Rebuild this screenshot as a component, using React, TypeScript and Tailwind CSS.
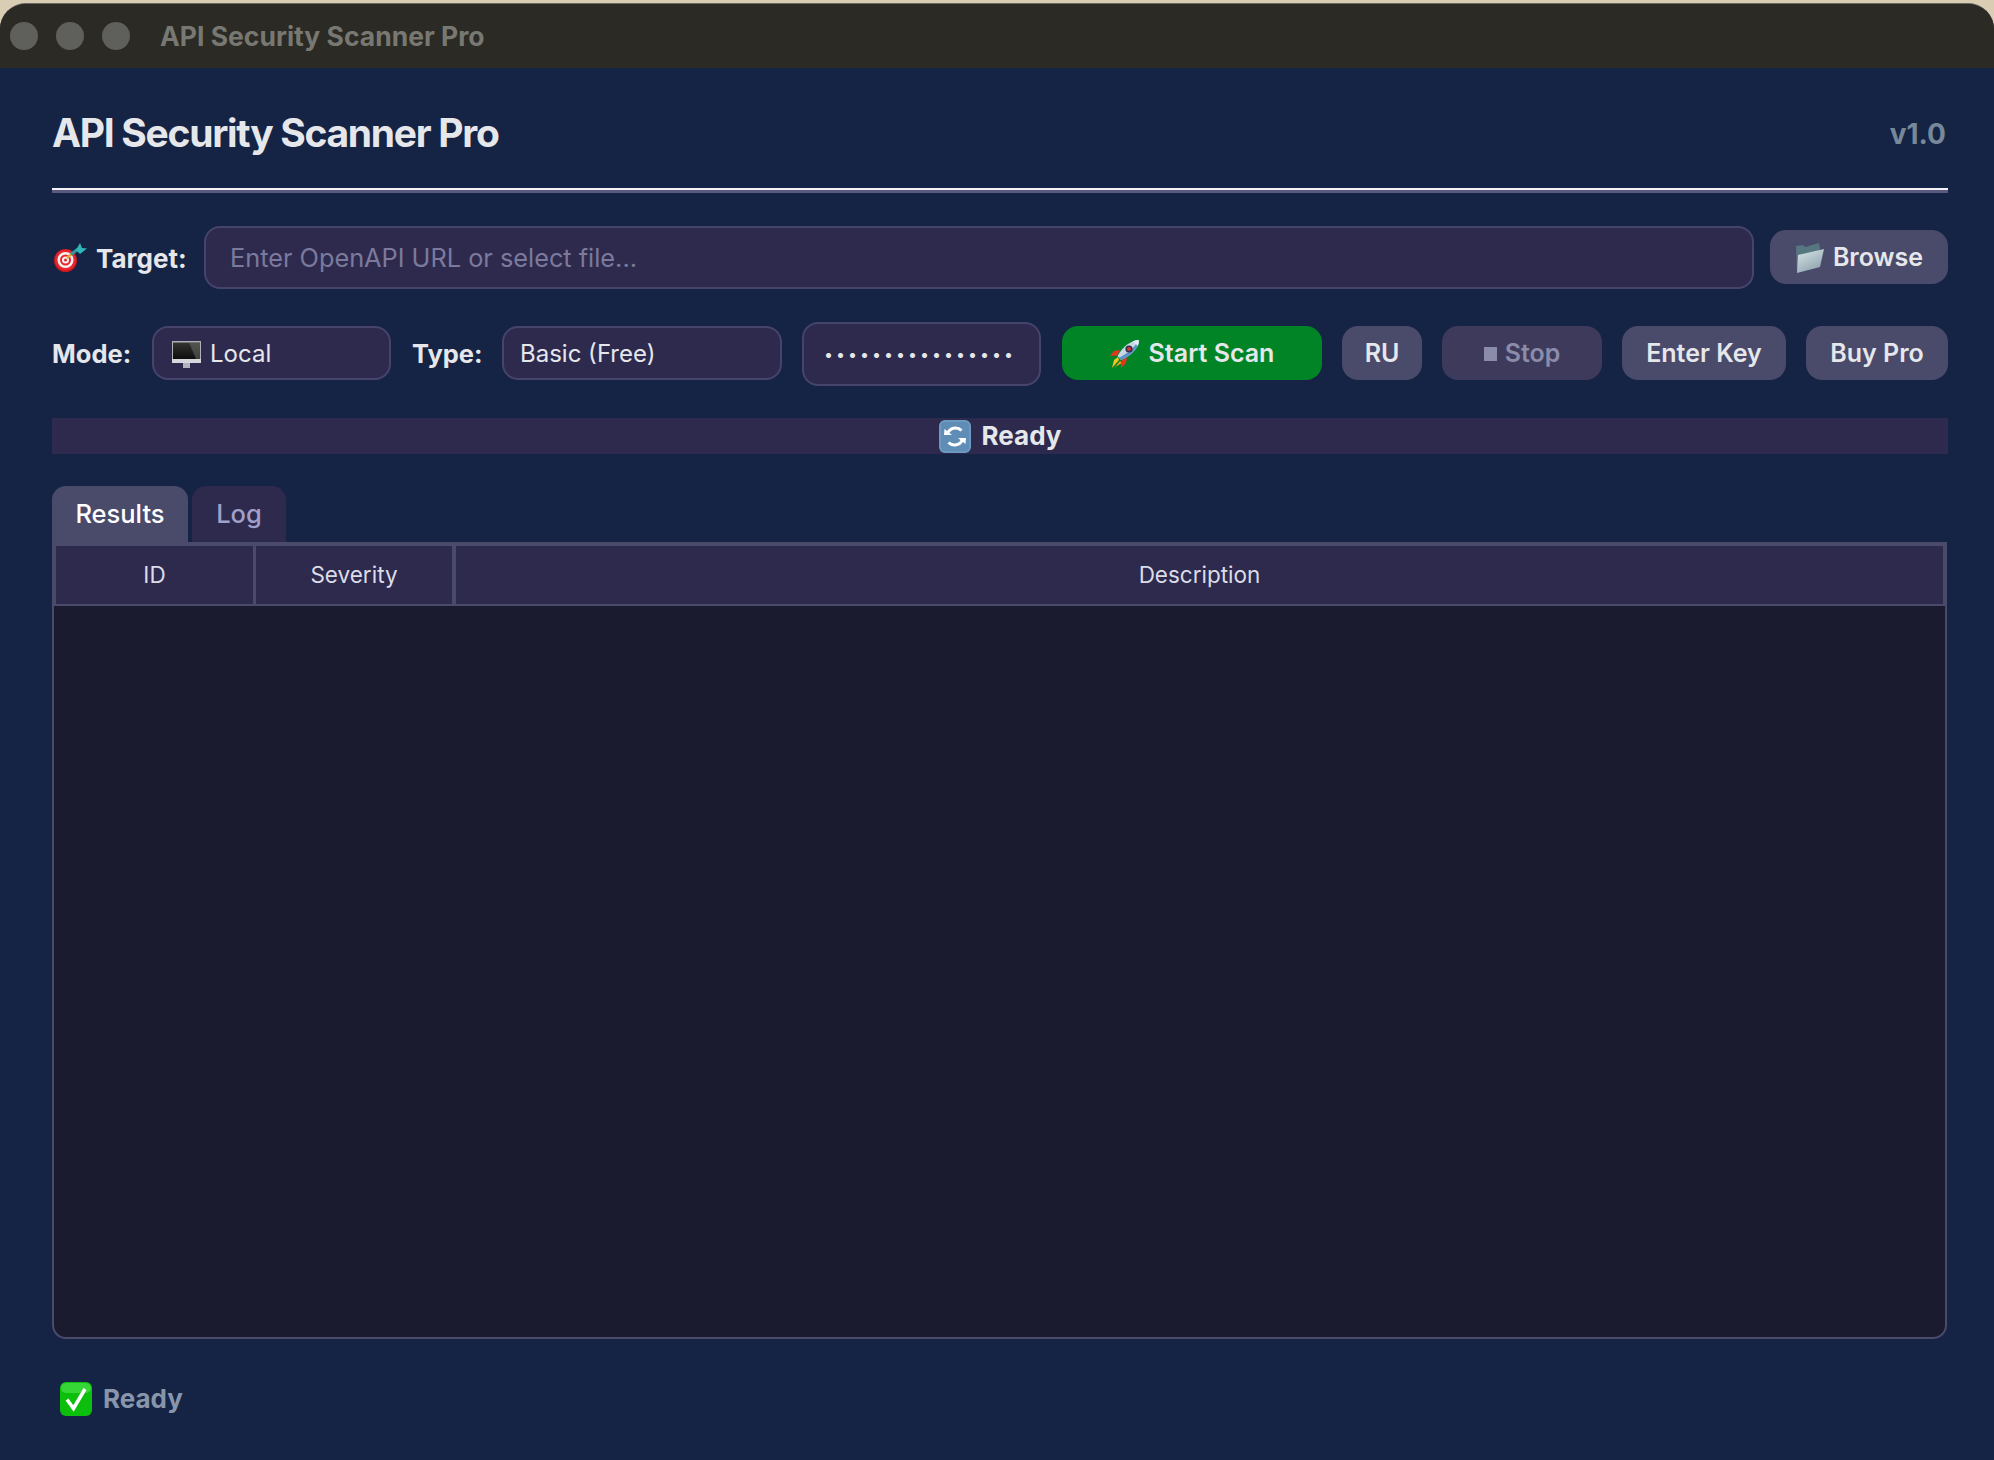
import React from 'react'

const font = "font-['Inter','Liberation_Sans',sans-serif]"

const TargetIcon = () => (
  <svg viewBox="0 0 33 29" className="w-[33px] h-[29px] shrink-0">
    <circle cx="11.500" cy="17.500" r="11.500" fill="#c8161f" />
    <circle cx="11.500" cy="17" r="10.500" fill="#e8262c" />
    <circle cx="11.500" cy="17" r="8" fill="#f6f2f2" />
    <circle cx="11.500" cy="17" r="5.500" fill="#e8262c" />
    <circle cx="11.500" cy="17" r="3.500" fill="#f6f2f2" />
    <circle cx="11.500" cy="17" r="1.500" fill="#e8262c" />
    <path d="M13 15 L18 10.500" stroke="#e6a93a" strokeWidth="2.500" />
    <path d="M17 11.500 L24 6" stroke="#2e97a3" strokeWidth="3" />
    <path d="M22 7 L26 0 L28 5 L33 5.500 L26 11 Z" fill="#2fb6ba" />
  </svg>
)

const MonitorIcon = () => (
  <svg viewBox="0 0 29 27" className="w-[29px] h-[27px] shrink-0">
    <defs>
      <linearGradient id="screen" x1="0" y1="1" x2="0" y2="0">
        <stop offset="0" stopColor="#0d0d0f" />
        <stop offset="1" stopColor="#34352f" />
      </linearGradient>
    </defs>
    <rect x="0" y="0" width="29" height="20" fill="#aeb0b6" />
    <rect x="1" y="1.500" width="27" height="16.500" fill="url(#screen)" />
    <path d="M17 1.500 H28 V18 H24 Z" fill="#6b6c68" opacity="0.55" />
    <rect x="0" y="18" width="29" height="4" fill="#d6d6dc" />
    <rect x="11" y="22" width="7" height="5" fill="#b3b3bb" />
  </svg>
)

const RocketIcon = () => (
  <svg viewBox="0 0 29 28" className="w-[29px] h-[28px] shrink-0">
    <path d="M9 20 L2 28 L4 20 L8 17 Z" fill="#f4c51d" />
    <path d="M10 21 L5 27 L12 23 Z" fill="#f79a1a" />
    <path d="M10 10 L4 11 L0 16 L7 15.500 Z" fill="#e8331f" />
    <path d="M17 17 L16 23 L11 28 L11.500 20.500 Z" fill="#e8331f" />
    <path d="M29 0 C22 0 13 6 7.500 16 L11 20 C21 16 29 8 29 0 Z" fill="#c9d6e4" />
    <path d="M29 0 C29 8 21 16 11 20 L9 17.800 C18 13 25 7 29 0 Z" fill="#5e93c8" />
    <path d="M29 0 C27 0 25 0.500 23 1.200 L27.800 6 C28.600 4 29 2 29 0 Z" fill="#e4edf5" />
    <circle cx="19" cy="9" r="3.600" fill="#2d3146" />
    <circle cx="19" cy="9" r="2" fill="#d8353a" />
  </svg>
)

const FolderIcon = () => (
  <svg viewBox="0 0 29 30" className="w-[29px] h-[30px] shrink-0">
    <defs>
      <linearGradient id="folder" x1="0" y1="0" x2="0.600" y2="1">
        <stop offset="0" stopColor="#dbe6ea" />
        <stop offset="1" stopColor="#8fa5ae" />
      </linearGradient>
    </defs>
    <path d="M1 3 L8 2 L10 4 L24 0 L25 6 L8 26 L2 30 Z" fill="#56777f" />
    <path d="M3 12 L29 6 L25 24 L2 30 Z" fill="url(#folder)" />
  </svg>
)

const RefreshIcon = () => (
  <svg viewBox="0 0 32 33" className="w-[32px] h-[33px] shrink-0">
    <rect width="32" height="33" rx="6" fill="#5f8db6" />
    <rect x="1" y="1" width="30" height="31" rx="5" fill="none" stroke="#7ba6c9" strokeWidth="1" />
    <path d="M8.500 13.500 A8.500 8.500 0 0 1 22.500 10.500" fill="none" stroke="#fff" strokeWidth="3" />
    <path d="M5 15 L13 15 L5.500 9 Z" fill="#fff" />
    <path d="M23.500 19.500 A8.500 8.500 0 0 1 9.500 22.500" fill="none" stroke="#fff" strokeWidth="3" />
    <path d="M27 18 L19 18 L26.500 24 Z" fill="#fff" />
  </svg>
)

const CheckIcon = () => (
  <svg viewBox="0 0 32 34" className="w-[32px] h-[34px] shrink-0">
    <rect width="32" height="34" rx="6" fill="#0dbf0d" />
    <rect x="1" y="1" width="30" height="10" rx="5" fill="#35d635" />
    <path d="M7 17.500 L13.500 26.500 L25 7" fill="none" stroke="#fff" strokeWidth="3.500" />
  </svg>
)

const Action = ({ className, children }: { className: string; children: React.ReactNode }) => (
  <button className={`h-[54px] rounded-[16px] pt-[2px] flex items-center justify-center gap-[8px] text-[25px] font-semibold shrink-0 ${className}`}>
    {children}
  </button>
)

export default function App() {
  return (
    <div className={`w-[1994px] h-[1460px] overflow-hidden bg-[#d9cdb4] pt-[3px] ${font}`}>
      <div className="h-[1470px] bg-[#152344] rounded-t-[26px] overflow-hidden flex flex-col border-t border-[#6b675c]">
        {/* title bar */}
        <div className="h-[64px] bg-[#2b2a25] flex items-center pl-[10px] shrink-0">
          <div className="w-[28px] h-[28px] rounded-full bg-[#5f5f5c]" />
          <div className="w-[28px] h-[28px] rounded-full bg-[#5f5f5c] ml-[18px]" />
          <div className="w-[28px] h-[28px] rounded-full bg-[#5f5f5c] ml-[18px]" />
          <span className="ml-[30px] pt-[2px] text-[26.500px] font-bold text-[#787872]">API Security Scanner Pro</span>
        </div>

        <div className="pl-[52px] pr-[46px] flex flex-col flex-1">
          <div className="h-[120px] pt-[10px] flex items-center justify-between shrink-0">
            <h1 className="text-[39px] font-bold tracking-[-1.300px] text-[#e5e7eb]">API Security Scanner Pro</h1>
            <span className="pt-[2px] text-[28px] font-bold text-[#77889a] mr-[2px]">v1.0</span>
          </div>
          <div className="h-[5px] border-t-[2px] border-[#f1f1f6] bg-[#5a5a7e] shrink-0" />

          {/* target row */}
          <div className="mt-[33px] h-[63px] pb-[1px] flex items-center shrink-0">
            <span className="ml-[2px]"><TargetIcon /></span>
            <span className="ml-[9px] pt-[2px] text-[26px] font-bold text-[#e5e7eb] w-[108px]">Target:</span>
            <input
              readOnly
              placeholder="Enter OpenAPI URL or select file..."
              className="flex-1 self-start h-[63px] rounded-[16px] border-2 border-[#47446c] bg-[#2d2a4e] pl-[24px] text-[25.300px] text-[#e5e7eb] placeholder:text-[#7b7a9c] outline-none"
            />
            <Action className="ml-[16px] w-[178px] gap-[9px] bg-[#4a4a6a] text-[#e5e7eb]">
              <FolderIcon />
              <span>Browse</span>
            </Action>
          </div>

          {/* mode row */}
          <div className="mt-[33px] h-[64px] pb-[2px] flex items-center gap-[20px] shrink-0">
            <div className="flex items-center">
              <span className="pt-[3px] text-[25.500px] font-bold text-[#e5e7eb] w-[100px]">Mode:</span>
              <div className="w-[239px] h-[54px] pt-[2px] rounded-[16px] border-2 border-[#47446c] bg-[#2d2a4e] flex items-center pl-[18px] gap-[9px] text-[24px] text-[#e5e7eb]">
                <MonitorIcon />
                <span>Local</span>
              </div>
            </div>
            <div className="flex items-center ml-[1px]">
              <span className="pt-[3px] text-[25.500px] font-bold text-[#e5e7eb] w-[90px]">Type:</span>
              <div className="w-[280px] h-[54px] pt-[2px] rounded-[16px] border-2 border-[#47446c] bg-[#2d2a4e] flex items-center pl-[16px] text-[24px] text-[#e5e7eb]">
                Basic (Free)
              </div>
            </div>
            <input
              readOnly
              type="password"
              defaultValue="aaaaaaaaaaaaaaaa"
              className="w-[239px] h-[64px] self-start rounded-[16px] border-2 border-[#47446c] bg-[#2d2a4e] pl-[20px] text-[16px] tracking-[3px] text-[#e5e7eb] outline-none"
            />
            <Action className="ml-[1px] w-[260px] bg-[#008425] text-[#e5e7eb] gap-[10px]">
              <RocketIcon />
              <span>Start Scan</span>
            </Action>
            <Action className="w-[80px] bg-[#4a4a6a] text-[#e5e7eb]">RU</Action>
            <Action className="w-[160px] bg-[#3d3a5c] text-[#8b8baa]">
              <span className="w-[13px] h-[14px] bg-[#8b8baa]" />
              <span>Stop</span>
            </Action>
            <Action className="w-[164px] bg-[#4a4a6a] text-[#e5e7eb]">Enter Key</Action>
            <Action className="w-[142px] bg-[#4a4a6a] text-[#e5e7eb]">Buy Pro</Action>
          </div>

          {/* status strip */}
          <div className="mt-[32px] h-[36px] bg-[#2d2a4e] flex items-center justify-center gap-[11px] text-[26px] font-bold text-[#e5e7eb] shrink-0">
            <RefreshIcon />
            <span className="pb-[2px]">Ready</span>
          </div>

          {/* tabs */}
          <div className="mt-[32px] h-[56px] flex gap-[4px] shrink-0">
            <div className="w-[136px] rounded-t-[14px] bg-[#4a4a6a] text-white text-[25.500px] font-medium flex items-center justify-center">Results</div>
            <div className="w-[94px] rounded-t-[14px] bg-[#2d2a4e] text-[#a0a0c8] text-[25.500px] font-medium flex items-center justify-center">Log</div>
          </div>

          {/* table */}
          <div className="h-[797px] mr-[1px] border-x-2 border-b-2 border-t-4 border-[#4a4a6a] rounded-b-[14px] bg-[#1b1b2f] overflow-hidden flex flex-col shrink-0">
            <div className="h-[60px] flex bg-[#2d2a4e] border-x-2 border-b-2 border-[#4a4a6a] text-[22.500px] text-[#dcdce8] shrink-0">
              <div className="w-[200px] flex items-center justify-center border-r-[3px] border-[#4a4a6a]">ID</div>
              <div className="w-[200px] flex items-center justify-center border-r-[4px] border-[#4a4a6a]">Severity</div>
              <div className="flex-1 flex items-center justify-center">Description</div>
            </div>
          </div>

          {/* footer */}
          <div className="mt-[40px] pl-[8px] flex items-center gap-[11px] text-[26px] font-bold text-[#8796aa]">
            <CheckIcon />
            <span className="pb-[1px]">Ready</span>
          </div>
        </div>
      </div>
    </div>
  )
}
